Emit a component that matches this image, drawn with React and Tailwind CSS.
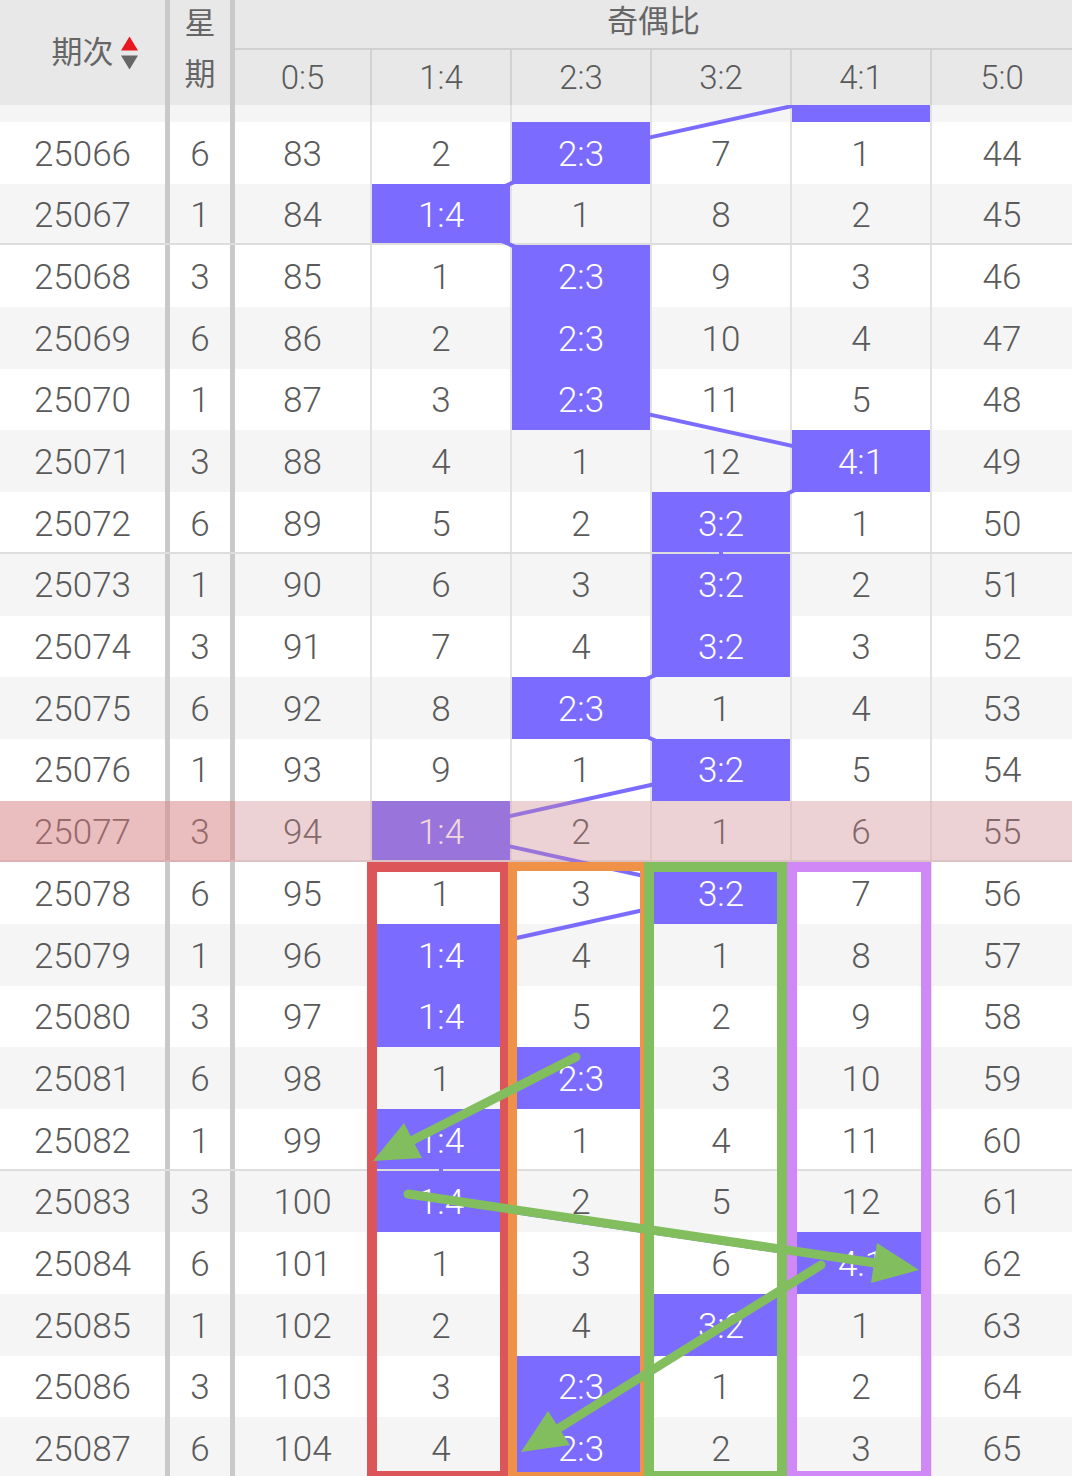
import React from 'react';

const RATIOS = ['0:5', '1:4', '2:3', '3:2', '4:1', '5:0'];
const COL_W = ['w-[135px]', 'w-[140px]', 'w-[140px]', 'w-[140px]', 'w-[140px]', 'w-[142px]'];
const COL_X = [235, 370, 510, 650, 790, 930];
const COL_PX = [135, 140, 140, 140, 140, 142];
const ROW_H = 61.7;

// [期次, 星期, 0:5..5:0]  null = 本期开出
const rows = [
  ['25065', '', ['', '', '', '', null, '']],
  ['25066', 6, [83, 2, null, 7, 1, 44]],
  ['25067', 1, [84, null, 1, 8, 2, 45]],
  ['25068', 3, [85, 1, null, 9, 3, 46]],
  ['25069', 6, [86, 2, null, 10, 4, 47]],
  ['25070', 1, [87, 3, null, 11, 5, 48]],
  ['25071', 3, [88, 4, 1, 12, null, 49]],
  ['25072', 6, [89, 5, 2, null, 1, 50]],
  ['25073', 1, [90, 6, 3, null, 2, 51]],
  ['25074', 3, [91, 7, 4, null, 3, 52]],
  ['25075', 6, [92, 8, null, 1, 4, 53]],
  ['25076', 1, [93, 9, 1, null, 5, 54]],
  ['25077', 3, [94, null, 2, 1, 6, 55]],
  ['25078', 6, [95, 1, 3, null, 7, 56]],
  ['25079', 1, [96, null, 4, 1, 8, 57]],
  ['25080', 3, [97, null, 5, 2, 9, 58]],
  ['25081', 6, [98, 1, null, 3, 10, 59]],
  ['25082', 1, [99, null, 1, 4, 11, 60]],
  ['25083', 3, [100, null, 2, 5, 12, 61]],
  ['25084', 6, [101, 1, 3, 6, null, 62]],
  ['25085', 1, [102, 2, 4, null, 1, 63]],
  ['25086', 3, [103, 3, null, 1, 2, 64]],
  ['25087', 6, [104, 4, null, 2, 3, 65]],
];

const GROUP_END = ['25067', '25072', '25077', '25082', '25087'];
const HIGHLIGHT = '25077';

const points = rows.map((r, i) => {
  const j = r[2].indexOf(null);
  const x = COL_X[j] + COL_PX[j] / 2 + 1;
  const y = ROW_H * i + ROW_H / 2;
  return `${x},${y}`;
});

const SortIcon = () => (
  <svg width="17" height="33" viewBox="0 0 17 33" className="absolute left-full top-1/2 -translate-y-1/2 ml-[7px]">
    <polygon points="8.5,0 17,14 0,14" fill="#e8161f" />
    <polygon points="0,19 17,19 8.5,33" fill="#666666" />
  </svg>
);

const Row = ({ row, index }) => {
  const [period, week, vals] = row;
  const hidden = index === 0;
  const stripe = index % 2 === 1 ? 'bg-white' : 'bg-[#f5f5f5]';
  return (
    <div className={`relative flex h-[61.7px] ${stripe}`}>
      <div className="w-[170px] shrink-0 border-r-[5px] border-[#c9c9c9] flex items-center justify-center pt-[4px]">
        {!hidden && <span className="relative z-20">{period}</span>}
      </div>
      <div className="w-[65px] shrink-0 border-r-[5px] border-[#c9c9c9] flex items-center justify-center pt-[4px]">
        {!hidden && <span className="relative z-20">{week}</span>}
      </div>
      {vals.map((v, j) => (
        <div
          key={j}
          className={`${COL_W[j]} shrink-0 flex items-center justify-center pt-[4px] ${j > 0 ? 'border-l-2 border-[#e2e2e2]' : ''} ${v === null ? 'bg-[#7b6bff] text-white' : ''}`}
        >
          {!hidden && <span className="relative z-20">{v === null ? RATIOS[j] : v}</span>}
        </div>
      ))}
      {GROUP_END.includes(period) && (
        <div className="absolute left-0 right-0 bottom-0 h-[2px] bg-[#dddddd] z-[5]" />
      )}
      {period === HIGHLIGHT && (
        <>
          <div className="absolute inset-0 bg-[rgba(218,138,144,0.32)] z-30" />
          <div className="absolute left-0 top-0 bottom-0 w-[235px] bg-[rgba(232,104,106,0.2)] z-30" />
        </>
      )}
    </div>
  );
};

export default function App() {
  return (
    <div className="relative w-[1072px] h-[1476px] overflow-hidden bg-white text-[#5a5a5a] font-[Roboto,'Noto_Sans_CJK_SC',sans-serif]">
      {/* 表头 */}
      <div className="flex h-[105px] bg-[#e8e8e8] text-[#666666]">
        <div className="w-[170px] shrink-0 border-r-[5px] border-[#c9c9c9] flex items-center justify-center">
          <span className="relative text-[31px] leading-none">
            期次
            <SortIcon />
          </span>
        </div>
        <div className="w-[65px] shrink-0 border-r-[5px] border-[#c9c9c9] flex items-center justify-center pb-[8px]">
          <div className="w-[32px] text-[31px] leading-[51px] text-center">星期</div>
        </div>
        <div className="flex-1 flex flex-col">
          <div className="h-[50px] border-b-2 border-[#d0d0d0] flex items-center justify-center pb-[4px]">
            <span className="text-[31px]">奇偶比</span>
          </div>
          <div className="flex flex-1">
            {RATIOS.map((r, j) => (
              <div
                key={r}
                className={`${COL_W[j]} shrink-0 flex items-center justify-center text-[33px] font-light text-[#5a5a5a] ${j > 0 ? 'border-l-2 border-[#d2d2d2]' : ''}`}
              >
                {r}
              </div>
            ))}
          </div>
        </div>
      </div>

      {/* 走势数据 */}
      <div className="h-[1371px] overflow-hidden">
        <div className="relative -mt-[44.7px] text-[35px] font-light">
          {rows.map((row, i) => (
            <Row key={row[0]} row={row} index={i} />
          ))}
          <svg
            className="absolute left-0 top-0 z-10 pointer-events-none"
            width="1072"
            height={rows.length * ROW_H}
          >
            <polyline points={points.join(' ')} fill="none" stroke="#7b6bff" strokeWidth="4" />
          </svg>
        </div>
      </div>

      {/* 标注框 */}
      <div className="absolute z-40 top-[862px] left-[367px] w-[143px] h-[619px] border-[10px] border-[#dc5659] pointer-events-none" />
      <div className="absolute z-40 top-[862px] left-[508px] w-[141px] h-[619px] border-[9px] border-[#ef9147] pointer-events-none" />
      <div className="absolute z-40 top-[862px] left-[644px] w-[143px] h-[619px] border-[10px] border-[#83be5e] pointer-events-none" />
      <div className="absolute z-40 top-[862px] left-[787px] w-[144px] h-[619px] border-[10px] border-[#cf88f5] pointer-events-none" />

      {/* 箭头 */}
      <svg className="absolute left-0 top-0 z-50 pointer-events-none" width="1072" height="1476">
        <g stroke="#82be5e" strokeWidth="9" strokeLinecap="round">
          <line x1="576" y1="1057" x2="413" y2="1140" />
          <line x1="408" y1="1194" x2="875" y2="1263" />
          <line x1="821" y1="1265" x2="559" y2="1428" />
        </g>
        <g fill="#82be5e">
          <polygon points="373,1161 422,1158 404,1123" />
          <polygon points="919,1270 871,1283 877,1243" />
          <polygon points="521,1452 570,1445 548,1411" />
        </g>
      </svg>
    </div>
  );
}
